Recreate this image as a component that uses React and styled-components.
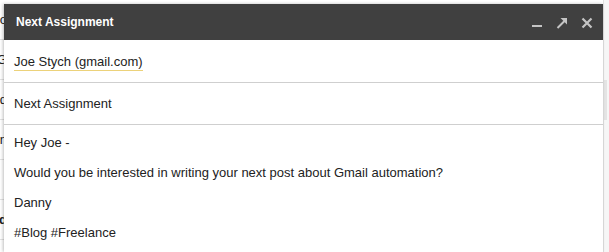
import React from "react";
import styled, { createGlobalStyle } from "styled-components";

/*
    Back page strip | Compose window | Scroll strip
    Compose: Header / To / Subject / Body
*/

const GlobalStyle = createGlobalStyle`
  html, body {
    margin: 0;
    padding: 0;
    background: #ffffff;
  }
  body {
    font-family: "Liberation Sans", Arial, sans-serif;
  }
`;

const backRows = [
  { ch: "o", bold: false },
  { ch: "G", bold: false },
  { ch: "d", bold: false },
  { ch: "n", bold: false },
  { ch: "i", bold: false, blue: true },
  { ch: "d", bold: true },
  { ch: "", bold: false },
];

const bodyLines = [
  "Hey Joe -",
  "Would you be interested in writing your next post about Gmail automation?",
  "Danny",
  "#Blog #Freelance",
];

const MinimizeIcon = () => (
  <svg width="12" height="12" viewBox="0 0 12 12">
    <rect x="1" y="8" width="10" height="2" fill="#c4c4c4" />
  </svg>
);

const ExpandIcon = () => (
  <svg width="12" height="12" viewBox="0 0 12 12">
    <path d="M1.5 11 L9.5 3" stroke="#c4c4c4" strokeWidth="2" fill="none" />
    <path d="M4.5 1 L11 1 L11 7.5 Z" fill="#c4c4c4" />
  </svg>
);

const CloseIcon = () => (
  <svg width="12" height="12" viewBox="0 0 12 12">
    <path d="M1.5 1.5 L10.5 10.5 M10.5 1.5 L1.5 10.5" stroke="#c4c4c4" strokeWidth="2.2" fill="none" />
  </svg>
);

const App = () => {
  return (
    <>
      <GlobalStyle />
      <Page>
        <BackStrip>
          {backRows.map((r, i) => (
            <BackRow key={i} $bold={r.bold} $blue={r.blue}>
              {r.ch}
            </BackRow>
          ))}
        </BackStrip>
        <Compose>
          <Header>
            <Title>Next Assignment</Title>
            <Controls>
              <IconButton>
                <MinimizeIcon />
              </IconButton>
              <IconButton>
                <ExpandIcon />
              </IconButton>
              <IconButton>
                <CloseIcon />
              </IconButton>
            </Controls>
          </Header>
          <FieldRow $height={42}>
            <Recipient>Joe Stych (gmail.com)</Recipient>
          </FieldRow>
          <FieldRow $height={41}>
            <Subject>Next Assignment</Subject>
          </FieldRow>
          <Body>
            {bodyLines.map((line) => (
              <Line key={line}>{line}</Line>
            ))}
          </Body>
        </Compose>
        <ScrollStrip>
          <ScrollThumb />
        </ScrollStrip>
      </Page>
    </>
  );
};

export default App;

const Page = styled.div`
  display: flex;
  flex-flow: row nowrap;
  width: 609px;
  height: 252px;
  overflow: hidden;
`;

const BackStrip = styled.div`
  width: 4px;
  flex: none;
  display: flex;
  flex-flow: column nowrap;
  overflow: hidden;
  background: #ffffff;
`;

const BackRow = styled.div`
  height: 40px;
  flex: none;
  display: flex;
  align-items: center;
  justify-content: flex-end;
  border-bottom: 1px solid #e2e2e2;
  box-sizing: border-box;
  font-size: 13px;
  font-weight: ${(p) => (p.$bold ? 700 : 400)};
  color: ${(p) => (p.$blue ? "#a9c3e8" : "#222222")};
  margin-right: -3px;
  white-space: nowrap;
`;

const Compose = styled.div`
  width: 599px;
  flex: none;
  margin-top: 4px;
  display: flex;
  flex-flow: column nowrap;
  background: #ffffff;
  box-shadow: -1px 0 3px rgba(0, 0, 0, 0.25);
  position: relative;
  z-index: 1;
`;

const Header = styled.div`
  height: 36px;
  flex: none;
  display: flex;
  flex-flow: row nowrap;
  align-items: center;
  justify-content: space-between;
  background: #404040;
  padding: 0 10px 0 12px;
`;

const Title = styled.span`
  color: #ffffff;
  font-size: 12px;
  font-weight: 700;
`;

const Controls = styled.div`
  display: flex;
  flex-flow: row nowrap;
  align-items: center;
  gap: 13px;
  padding-top: 2px;
`;

const IconButton = styled.div`
  width: 12px;
  height: 12px;
  display: flex;
`;

const FieldRow = styled.div`
  height: ${(p) => p.$height}px;
  flex: none;
  display: flex;
  align-items: center;
  padding: 0 10px;
  border-bottom: 1px solid #cfcfcf;
`;

const Recipient = styled.span`
  font-size: 13px;
  color: #222222;
  line-height: 16px;
  padding-top: 2px;
  border-bottom: 1px solid #ecd27a;
`;

const Subject = styled.span`
  font-size: 13px;
  color: #222222;
`;

const Body = styled.div`
  flex: 1;
  display: flex;
  flex-flow: column nowrap;
  padding: 3px 10px 0;
`;

const Line = styled.div`
  height: 30px;
  line-height: 30px;
  font-size: 13px;
  color: #222222;
  white-space: nowrap;
`;

const ScrollStrip = styled.div`
  width: 6px;
  flex: none;
  background: #f6f6f6;
  border-left: 1px solid #e0e0e0;
  box-sizing: border-box;
  padding-top: 80px;
`;

const ScrollThumb = styled.div`
  width: 3px;
  height: 40px;
  background: #e4e4e4;
`;
